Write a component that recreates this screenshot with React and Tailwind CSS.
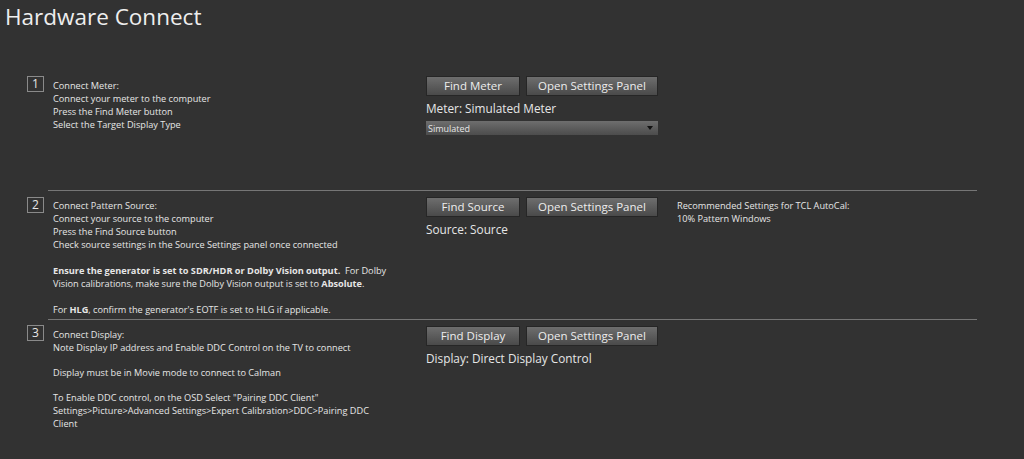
import React from "react";

const font = { fontFamily: '"Open Sans", "Noto Sans", sans-serif' };

function StepBox({ n }) {
  return (
    <div className="flex h-[16px] w-[17px] shrink-0 items-center justify-center border border-[#8a8a8a] text-[12px] leading-none text-[#e6e6e6]">
      {n}
    </div>
  );
}

function Btn({ children, w }) {
  return (
    <button
      className={`${w} h-[20px] shrink-0 border border-[#262626] bg-gradient-to-b from-[#6e6e6e] to-[#4a4a4a] text-[11.5px] leading-none text-[#ededed]`}
    >
      {children}
    </button>
  );
}

function Buttons({ first, firstW }) {
  return (
    <div className="flex gap-[6px]">
      <Btn w={firstW}>{first}</Btn>
      <Btn w="w-[132px]">Open Settings Panel</Btn>
    </div>
  );
}

export default function App() {
  return (
    <div className="h-[459px] w-[1024px] overflow-hidden bg-[#323232] text-[#e6e6e6]" style={font}>
      <h1 className="pl-[5px] pt-[2px] text-[22.5px] leading-[30px] text-[#eeeeee]">Hardware Connect</h1>

      <div className="ml-[27px] mt-[44px] w-[950px]">
        {/* step 1 */}
        <div className="flex h-[114px] items-start">
          <div className="flex w-[399px] gap-[9px]">
            <StepBox n="1" />
            <div className="mt-[3px] text-[9.2px] leading-[13px]">
              <p>Connect Meter:</p>
              <p>Connect your meter to the computer</p>
              <p>Press the Find Meter button</p>
              <p>Select the Target Display Type</p>
            </div>
          </div>
          <div className="flex flex-col">
            <Buttons first="Find Meter" firstW="w-[94px]" />
            <p className="mt-[4px] text-[11.8px] leading-[16px]">Meter: Simulated Meter</p>
            <div className="mt-[5px] flex h-[14px] w-[232px] items-center justify-between bg-gradient-to-b from-[#6e6e6e] to-[#4c4c4c] px-[2px] text-[9px] leading-none">
              <span>Simulated</span>
              <svg width="6" height="4" viewBox="0 0 6 4" className="mr-[3px]">
                <path d="M0 0h6L3 4z" fill="#111" />
              </svg>
            </div>
          </div>
        </div>

        <div className="ml-[21px] h-px bg-[#767676]" />

        {/* step 2 */}
        <div className="mt-[6px] flex h-[122px] items-start">
          <div className="flex w-[399px] gap-[9px]">
            <StepBox n="2" />
            <div className="mt-[2px] w-[345px] text-[9.2px] leading-[13px]">
              <p>Connect Pattern Source:</p>
              <p>Connect your source to the computer</p>
              <p>Press the Find Source button</p>
              <p>Check source settings in the Source Settings panel once connected</p>
              <p className="mt-[13px]">
                <b>Ensure the generator is set to SDR/HDR or Dolby Vision output.</b>&nbsp; For Dolby
                <br />
                Vision calibrations, make sure the Dolby Vision output is set to <b>Absolute</b>.
              </p>
              <p className="mt-[13px]">
                For <b>HLG</b>, confirm the generator's EOTF is set to HLG if applicable.
              </p>
            </div>
          </div>
          <div className="flex flex-col">
            <Buttons first="Find Source" firstW="w-[94px]" />
            <p className="mt-[4px] text-[11.8px] leading-[16px]">Source: Source</p>
          </div>
          <div className="ml-[19px] mt-[2px] text-[9.2px] leading-[13px]">
            <p>Recommended Settings for TCL AutoCal:</p>
            <p>10% Pattern Windows</p>
          </div>
        </div>

        <div className="ml-[21px] h-px bg-[#767676]" />

        {/* step 3 */}
        <div className="mt-[5px] flex items-start">
          <div className="flex w-[399px] gap-[9px]">
            <StepBox n="3" />
            <div className="mt-[3px] w-[345px] text-[9.2px] leading-[13px]">
              <p>Connect Display:</p>
              <p>Note Display IP address and Enable DDC Control on the TV to connect</p>
              <p className="mt-[12px]">Display must be in Movie mode to connect to Calman</p>
              <p className="mt-[12px]">To Enable DDC control, on the OSD Select "Pairing DDC Client"</p>
              <p>
                Settings&gt;Picture&gt;Advanced Settings&gt;Expert Calibration&gt;DDC&gt;Pairing DDC
                <br />
                Client
              </p>
            </div>
          </div>
          <div className="mt-[1px] flex flex-col">
            <Buttons first="Find Display" firstW="w-[94px]" />
            <p className="mt-[4px] text-[11.8px] leading-[16px]">Display: Direct Display Control</p>
          </div>
        </div>
      </div>
    </div>
  );
}
